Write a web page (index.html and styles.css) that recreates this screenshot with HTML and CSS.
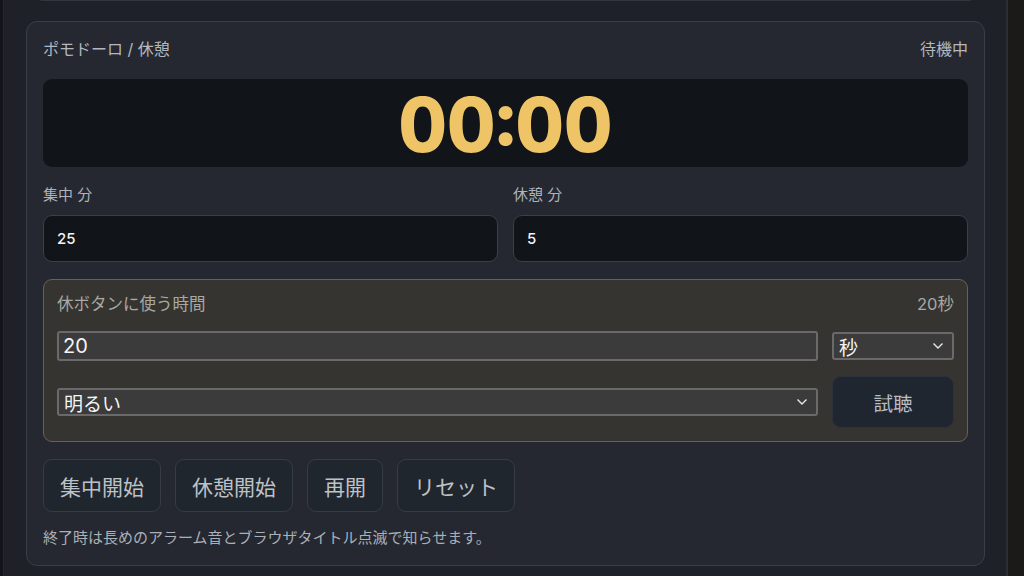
FILE: index.html
```html
<!DOCTYPE html>
<html lang="ja">
<head>
<meta charset="utf-8">
<title>ポモドーロ</title>
<link rel="stylesheet" href="styles.css">
</head>
<body>
<div class="page">
  <div class="edge-left"></div>
  <div class="panel">
    <div class="prev-card"></div>
    <section class="card">
      <div class="card-head">
        <span>ポモドーロ / 休憩</span>
        <span>待機中</span>
      </div>
      <div class="timer">00:00</div>
      <div class="fields">
        <div class="field">
          <span class="field-label">集中 分</span>
          <div class="input">25</div>
        </div>
        <div class="field">
          <span class="field-label">休憩 分</span>
          <div class="input">5</div>
        </div>
      </div>
      <div class="sound">
        <div class="sound-head">
          <span>休ボタンに使う時間</span>
          <span>20秒</span>
        </div>
        <div class="sound-row">
          <div class="ninput">20</div>
          <div class="nselect side">
            <span>秒</span>
            <svg class="chev" viewBox="0 0 12 8" width="12" height="8"><path d="M1.5 1.5 L6 6 L10.5 1.5" fill="none" stroke="currentColor" stroke-width="1.4"/></svg>
          </div>
        </div>
        <div class="sound-row">
          <div class="nselect wide">
            <span>明るい</span>
            <svg class="chev" viewBox="0 0 12 8" width="12" height="8"><path d="M1.5 1.5 L6 6 L10.5 1.5" fill="none" stroke="currentColor" stroke-width="1.4"/></svg>
          </div>
          <button class="preview">試聴</button>
        </div>
      </div>
      <div class="actions">
        <button class="btn">集中開始</button>
        <button class="btn">休憩開始</button>
        <button class="btn">再開</button>
        <button class="btn">リセット</button>
      </div>
      <p class="note">終了時は長めのアラーム音とブラウザタイトル点滅で知らせます。</p>
    </section>
  </div>
  <div class="edge-right"></div>
</div>
</body>
</html>
```

FILE: styles.css
```css
* { box-sizing: border-box; }
html, body {
  margin: 0;
  height: 100%;
  background: #1a1917;
  font-family: Inter, "Noto Sans CJK JP", sans-serif;
  overflow: hidden;
}
.page {
  display: flex;
  height: 576px;
}
.edge-left {
  width: 4px;
  background: #13151a;
  border-right: 1px solid #23262c;
}
.panel {
  width: 1004px;
  background: #1e2127;
  border-right: 2px solid #2a2d33;
  padding: 0 21px 0 22px;
  display: flex;
  flex-direction: column;
}
.edge-right {
  flex: 1;
  background: #1b1a18;
}
.prev-card {
  height: 20px;
  margin: -19px 7px 0 7px;
  border: 1px solid #32363e;
  border-top: none;
  border-radius: 0 0 10px 10px;
  background: #23262d;
}
.card {
  margin-top: 20px;
  width: 959px;
  height: 545px;
  background: #252830;
  border: 1px solid #393d46;
  border-radius: 11px;
  padding: 16px 16px 0 16px;
  display: flex;
  flex-direction: column;
}
.card-head {
  display: flex;
  justify-content: space-between;
  font-size: 16px;
  line-height: 22px;
  color: #b3b7bf;
}
.timer {
  margin-top: 19px;
  height: 88px;
  background: #111419;
  border-radius: 9px;
  display: flex;
  align-items: center;
  justify-content: center;
  color: #efc466;
  font-size: 75px;
  font-weight: 800;
  letter-spacing: 0;
  font-variant-numeric: tabular-nums;
  padding-top: 2px;
}
.fields {
  margin-top: 19px;
  display: grid;
  grid-template-columns: 1fr 1fr;
  gap: 15px;
}
.field {
  display: flex;
  flex-direction: column;
  gap: 11px;
}
.field-label {
  font-size: 15px;
  line-height: 18px;
  color: #aeb2ba;
}
.input {
  height: 47px;
  background: #111419;
  border: 1px solid #3a3f48;
  border-radius: 9px;
  padding: 0 13px;
  display: flex;
  align-items: center;
  color: #f2f3f5;
  font-size: 15px;
  font-weight: 500;
}
.sound {
  margin-top: 17px;
  height: 163px;
  background: #353430;
  border: 1px solid #6c6247;
  border-radius: 9px;
  padding: 13px 13px 0 13px;
  display: flex;
  flex-direction: column;
}
.sound-head {
  display: flex;
  justify-content: space-between;
  font-size: 16.5px;
  line-height: 22px;
  color: #a9a8a2;
}
.sound-row {
  display: flex;
  align-items: center;
  gap: 14px;
}
.sound-row:nth-child(2) { margin-top: 16px; }
.sound-row:nth-child(3) { margin-top: 15px; }
.ninput {
  flex: 1;
  height: 30px;
  background: #3b3b3b;
  border: 2px solid #6a6a6a;
  border-radius: 3px;
  padding: 0 4px;
  display: flex;
  align-items: center;
  color: #f4f4f4;
  font-size: 20px;
}
.nselect {
  height: 28px;
  background: #3b3b3b;
  border: 2px solid #6a6a6a;
  border-radius: 3px;
  padding: 0 8px 0 5px;
  display: flex;
  align-items: center;
  justify-content: space-between;
  color: #f4f4f4;
  font-size: 19px;
}
.nselect.side { width: 122px; }
.nselect.wide { flex: 1; }
.chev { color: #e8e8e8; }
.preview {
  width: 122px;
  height: 52px;
  background: #1f2630;
  border: 1px solid #2b323b;
  border-radius: 9px;
  color: #b9bdc4;
  font-family: inherit;
  font-size: 19.5px;
}
.actions {
  margin-top: 17px;
  display: flex;
  gap: 14px;
}
.btn {
  height: 53px;
  padding: 0 16px;
  background: #20262d;
  border: 1px solid #363c45;
  border-radius: 9px;
  color: #bdc1c8;
  font-family: inherit;
  font-size: 21px;
}
.note {
  margin: 17px 0 0 0;
  font-size: 15px;
  line-height: 18px;
  color: #aab0b8;
}
```
